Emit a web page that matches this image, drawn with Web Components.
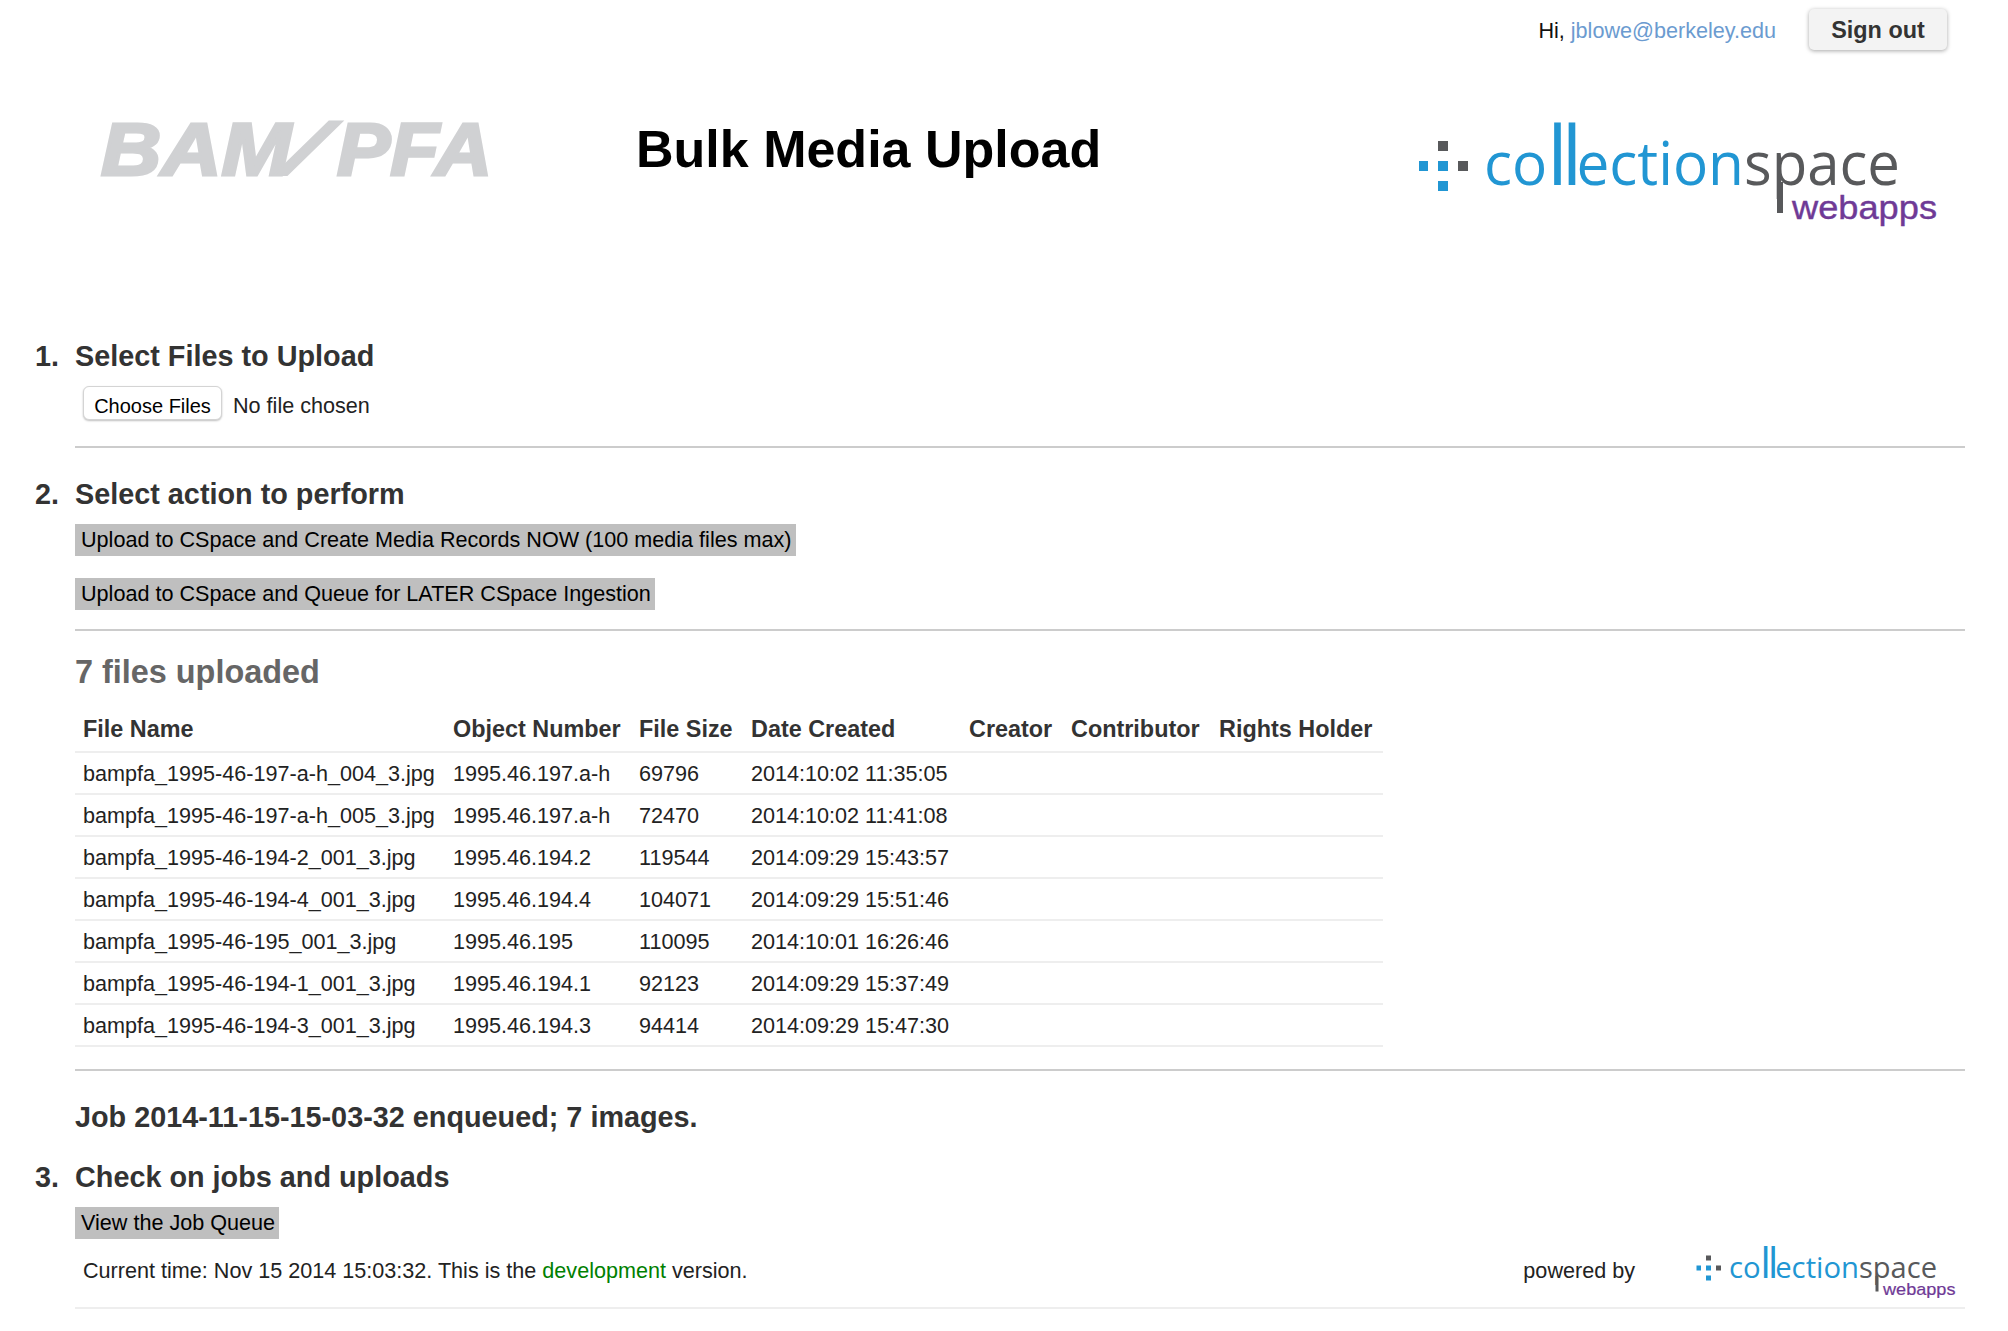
<!DOCTYPE html>
<html><head><meta charset="utf-8"><title>Bulk Media Upload</title>
<style>
html,body{margin:0;padding:0;background:#fff}
body{font-family:"Liberation Sans",Arial,sans-serif;color:#222}
</style></head><body>
<bmu-app></bmu-app>
<script>
function def(name, html){
  customElements.define(name, class extends HTMLElement{
    constructor(){super();this.attachShadow({mode:'open'}).innerHTML=html;}
  });
}
const FONT='"Liberation Sans",Arial,sans-serif';
const OS="'Open Sans',sans-serif";
def('cs-logo',`<style>:host{display:block;width:var(--w,520px);line-height:0}svg{width:100%;height:auto;display:block;overflow:visible}</style>
<svg viewBox="0 0 520 100" xmlns="http://www.w3.org/2000/svg">
<g fill="#2196d3"><rect x="1" y="39" width="9" height="10"/><rect x="20" y="39" width="10" height="10"/><rect x="20" y="59" width="10" height="10"/></g>
<g fill="#58595b"><rect x="20" y="19" width="10" height="10"/><rect x="40" y="39" width="10" height="10"/></g>
<rect x="359" y="60" width="6" height="31" fill="#58595b"/>
<text x="66" y="63" font-family="${OS}" font-weight="400" font-size="60" fill="#2196d3" textLength="260" lengthAdjust="spacingAndGlyphs">co<tspan font-size="83" font-weight="400" letter-spacing="-6">ll</tspan>ection</text>
<text x="326" y="63" font-family="${OS}" font-weight="400" font-size="60" fill="#58595b" textLength="156" lengthAdjust="spacingAndGlyphs">space</text>
<text x="374" y="97" font-family="${FONT}" font-size="34" fill="#6f3a96" stroke="#6f3a96" stroke-width=".4" textLength="145" lengthAdjust="spacingAndGlyphs">webapps</text>
</svg>`);
def('bam-logo',`<style>:host{display:block;width:388px;line-height:0}svg{width:100%;height:auto;display:block;overflow:visible}
text{font-family:${FONT};font-weight:700;font-style:italic;font-size:74px;fill:#d0d1d3;stroke:#d0d1d3;stroke-width:3px}</style>
<svg viewBox="0 0 388 54" xmlns="http://www.w3.org/2000/svg">
<text x="0" y="53" textLength="190" lengthAdjust="spacingAndGlyphs">BAM</text>
<text transform="translate(182,53) scale(2.2,1)" style="font-weight:400;stroke-width:1.2px">/</text>
<text x="236" y="53" textLength="155" lengthAdjust="spacingAndGlyphs">PFA</text></svg>`);
def('user-bar',`<style>:host{display:flex;justify-content:flex-end;align-items:center;gap:33px;padding:9px 61px 0 0;height:41px;font-size:21.6px;color:#111}
a{color:#6b9bd0;text-decoration:none}
.h{padding-top:2px}
.b{box-sizing:border-box;width:138px;height:41px;padding-top:2px;background:#f3f3f3;border-radius:5px;box-shadow:0 1px 4px rgba(0,0,0,.35);display:flex;align-items:center;justify-content:center;font-weight:700;font-size:23.4px;color:#333}</style>
<span class="h">Hi, <a>jblowe@berkeley.edu</a></span><span class="b">Sign out</span>`);
def('page-head',`<style>:host{display:flex;align-items:flex-start;height:234px}
bam-logo{margin:72px 0 0 101px}
h1{margin:0 0 0 147px;padding-top:66px;font-size:52px;line-height:66px;font-weight:700;color:#000;flex:1}
cs-logo{margin:72px 70px 0 0}</style>
<bam-logo></bam-logo><h1>Bulk Media Upload</h1><cs-logo></cs-logo>`);
def('step-head',`<style>:host{display:flex;font-weight:700;font-size:28.8px;line-height:36px;color:#333}
.n{width:75px;box-sizing:border-box;padding-left:35px;flex:none}</style><span class="n"><slot name="n"></slot></span><span><slot></slot></span>`);
def('gray-btn',`<style>:host{display:inline-block;background:#bfbfbf;height:32px;line-height:32px;padding:0 4px 0 6px;font-size:21.6px;color:#000;white-space:nowrap}</style><slot></slot>`);
def('file-pick',`<style>:host{display:flex;align-items:center;gap:11px;margin-left:83px;font-size:21.6px;color:#222}
.c{box-sizing:border-box;width:139px;height:34px;padding-top:6px;border:1px solid #d4d4d4;border-radius:6px;background:#fff;box-shadow:0 1px 2px rgba(0,0,0,.25);display:flex;align-items:center;justify-content:center;color:#000;font-size:20px}
.t{padding-top:5px}</style>
<span class="c">Choose Files</span><span class="t">No file chosen</span>`);
def('rule-line',`<style>:host{display:block;height:2px;margin-left:75px;width:1890px;background:var(--c,#ccc)}</style>`);
const rows=[["bampfa_1995-46-197-a-h_004_3.jpg","1995.46.197.a-h","69796","2014:10:02 11:35:05"],
["bampfa_1995-46-197-a-h_005_3.jpg","1995.46.197.a-h","72470","2014:10:02 11:41:08"],
["bampfa_1995-46-194-2_001_3.jpg","1995.46.194.2","119544","2014:09:29 15:43:57"],
["bampfa_1995-46-194-4_001_3.jpg","1995.46.194.4","104071","2014:09:29 15:51:46"],
["bampfa_1995-46-195_001_3.jpg","1995.46.195","110095","2014:10:01 16:26:46"],
["bampfa_1995-46-194-1_001_3.jpg","1995.46.194.1","92123","2014:09:29 15:37:49"],
["bampfa_1995-46-194-3_001_3.jpg","1995.46.194.3","94414","2014:09:29 15:47:30"]];
const rowsHtml=rows.map(r=>'<tr>'+r.map(c=>`<td>${c}</td>`).join('')+'<td></td><td></td><td></td></tr>').join('');
def('file-table',`<style>:host{display:block;margin-left:75px;width:1308px;font-size:21.6px;color:#222}
table{border-collapse:collapse;table-layout:fixed;width:1308px}
th,td{box-sizing:border-box;padding:2px 0 0 8px;text-align:left;white-space:nowrap;border-bottom:2px solid #eee;height:42px}
th{font-weight:700;color:#333;height:44px;font-size:23.4px;padding-top:0}
</style>
<table><colgroup><col style="width:370px"><col style="width:186px"><col style="width:112px"><col style="width:218px"><col style="width:102px"><col style="width:148px"><col style="width:172px"></colgroup>
<thead><tr><th>File Name</th><th>Object Number</th><th>File Size</th><th>Date Created</th><th>Creator</th><th>Contributor</th><th>Rights Holder</th></tr></thead>
<tbody>${rowsHtml}</tbody></table>`);
def('foot-bar',`<style>:host{display:flex;align-items:center;margin-left:83px;width:1882px;height:48px;font-size:21.6px;color:#222}
.s{flex:1}.g{color:#008000}.p{margin-right:61px}cs-logo{--w:260px;margin-right:9px}</style>
<span class="s">Current time: Nov 15 2014 15:03:32. This is the <span class="g">development</span> version.</span><span class="p">powered by</span><cs-logo></cs-logo>`);
def('bmu-app',`<style>:host{display:block;height:1331px;overflow:hidden}
.sec1{margin-top:54px}
file-pick{margin-top:12px}
.r1{margin-top:26px}.s2{margin-top:28px}
.btns{margin:12px 0 0 75px;display:flex;flex-direction:column;align-items:flex-start;gap:22px}
.r2{margin-top:19px}
h2{margin:19px 0 0 75px;font-size:32.4px;line-height:44px;color:#666;font-weight:700}
file-table{margin-top:14px}
.r3{margin-top:22px}
.job{margin:28px 0 0 75px;font-size:28.8px;line-height:36px;font-weight:700;color:#333}
.s3{margin-top:24px}
.b3{margin:12px 0 0 75px;height:32px}
foot-bar{margin-top:8px}
.r4{--c:#eee;margin-top:12px}
</style>
<user-bar></user-bar><page-head></page-head>
<step-head class="sec1"><span slot="n">1.</span>Select Files to Upload</step-head>
<file-pick></file-pick><rule-line class="r1"></rule-line>
<step-head class="s2"><span slot="n">2.</span>Select action to perform</step-head>
<div class="btns"><gray-btn>Upload to CSpace and Create Media Records NOW (100 media files max)</gray-btn><gray-btn>Upload to CSpace and Queue for LATER CSpace Ingestion</gray-btn></div>
<rule-line class="r2"></rule-line>
<h2>7 files uploaded</h2>
<file-table></file-table><rule-line class="r3"></rule-line>
<div class="job">Job 2014-11-15-15-03-32 enqueued; 7 images.</div>
<step-head class="s3"><span slot="n">3.</span>Check on jobs and uploads</step-head>
<div class="b3"><gray-btn>View the Job Queue</gray-btn></div>
<foot-bar></foot-bar><rule-line class="r4"></rule-line>`);
</script>
</body></html>
